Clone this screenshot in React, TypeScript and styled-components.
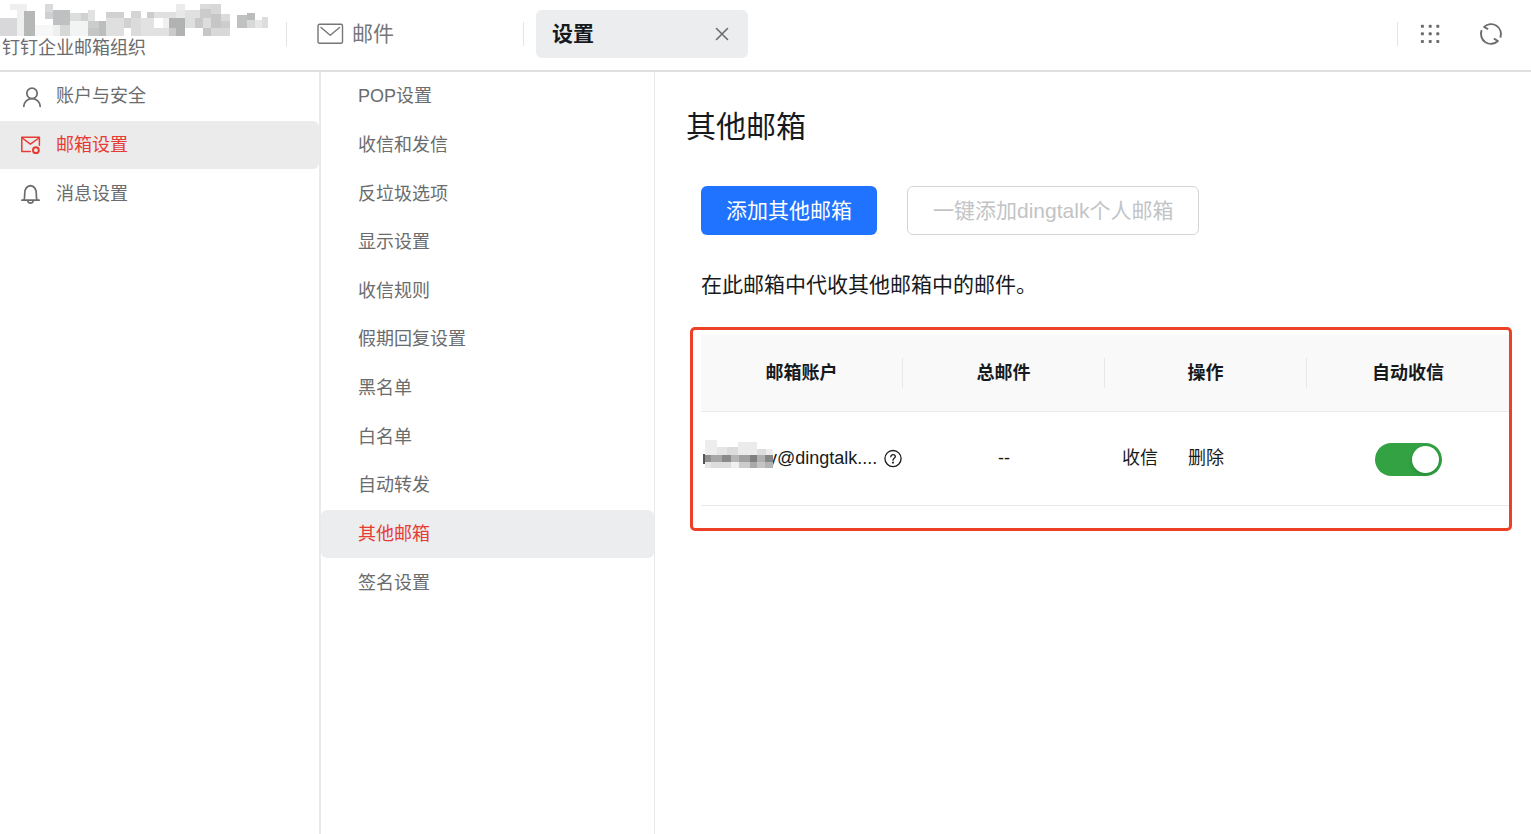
import React, { useState } from "react";
import styled, { createGlobalStyle } from "styled-components";

const GlobalStyle = createGlobalStyle`
  * { box-sizing: border-box; }
  body {
    margin: 0;
    background: #fff;
    color: #171a1d;
    font-family: "Liberation Sans", "Noto Sans CJK SC", sans-serif;
    font-size: 18px;
    line-height: 24px;
  }
  h1, p, ul { margin: 0; padding: 0; }
  ul { list-style: none; }
  a { color: inherit; text-decoration: none; }
  button { font: inherit; cursor: pointer; }
  svg { display: block; flex: none; overflow: visible; }
`;

const Page = styled.div`
  display: flex;
  flex-direction: column;
  min-height: 100vh;
`;

const TopBar = styled.header`
  display: flex;
  align-items: center;
  height: 72px;
  padding-bottom: 2px;
  border-bottom: 2px solid #dedfe0;
`;

const Account = styled.div`
  width: 286px;
  height: 60px;
  color: #6a6c6e;
`;

const OrgName = styled.div`
  padding-left: 2px;
  line-height: 24px;
`;

const Divider = styled.span`
  width: 1px;
  height: 24px;
  background: #e3e4e5;
`;

const MailTab = styled.a`
  display: flex;
  align-items: center;
  gap: 8px;
  width: 236px;
  padding-left: 30px;
  color: #747677;
  font-size: 21px;
`;

const ActiveTab = styled.div`
  display: flex;
  align-items: center;
  justify-content: space-between;
  width: 212px;
  height: 48px;
  margin: 0 auto 0 12px;
  padding: 0 16px;
  border-radius: 6px;
  background: #ecedef;
  font-size: 21px;
  font-weight: 700;
`;

const IconButton = styled.button`
  display: flex;
  padding: 0;
  border: 0;
  background: none;
  color: #6a6c6e;
`;

const Tools = styled.div`
  display: flex;
  align-items: center;
  gap: 36px;
  padding: 0 28px 0 21px;
`;

const Body = styled.div`
  display: flex;
  flex: 1;
`;

const SideNav = styled.nav<{ $width: number; $line: number }>`
  flex: none;
  width: ${(p) => p.$width}px;
  border-right: ${(p) => p.$line}px solid #e9eaeb;
`;

const NavList = styled.ul<{ $height: number }>`
  display: grid;
  grid-auto-rows: 1fr;
  min-height: ${(p) => p.$height}px;
`;

const NavLink = styled.a<{ $active?: boolean; $tone?: string; $indent: number }>`
  display: flex;
  align-items: center;
  gap: 14px;
  height: 100%;
  padding-left: ${(p) => p.$indent}px;
  border-radius: ${(p) => (p.$tone ? "0 6px 6px 0" : "6px")};
  color: ${(p) => (p.$active ? "#e63c33" : "#6a6c6e")};
  background: ${(p) => (p.$active ? p.$tone || "#ecedef" : "transparent")};
`;

const Main = styled.main`
  flex: 1;
  min-width: 0;
  padding: 37px 19px 36px 31px;
`;

const Title = styled.h1`
  font-size: 30px;
  font-weight: 400;
  line-height: 36px;
`;

const Actions = styled.div`
  display: flex;
  gap: 30px;
  padding: 41px 15px 0;
`;

const ActionButton = styled.button<{ $primary?: boolean }>`
  height: 49px;
  padding: 0 25px;
  border: ${(p) => (p.$primary ? "0" : "1px solid #d3d6d9")};
  border-radius: 6px;
  background: ${(p) => (p.$primary ? "#2073ff" : "#fff")};
  color: ${(p) => (p.$primary ? "#fff" : "#c2c4c5")};
  font-size: 21px;
  white-space: nowrap;
`;

const Hint = styled.p`
  padding: 36px 15px 0;
  font-size: 21px;
  line-height: 28px;
`;

const Highlight = styled.section`
  margin: 28px 0 0 4px;
  padding: 5px 0 22px 8px;
  border: 3px solid #ed4127;
  border-radius: 5px;
`;

const Table = styled.table`
  width: 100%;
  border-collapse: collapse;
  table-layout: fixed;
`;

const HeadCell = styled.th`
  height: 76px;
  padding: 0;
  border-bottom: 1px solid #e9e9ea;
  background: #f9f9f9;
`;

const HeadLabel = styled.div`
  line-height: 30px;
  border-right: 1px solid #e8e8e9;
  th:last-child > & { border-right: 0; }
`;

const Cell = styled.td`
  height: 94px;
  padding: 0;
  border-bottom: 1px solid #e9e9ea;
  text-align: center;
`;

const Address = styled.div`
  display: flex;
  align-items: center;
  padding-left: 2px;
`;

/* The mosaic lies over the first letters of the address. */
const AddressMask = styled.div`
  position: relative;
  z-index: 1;
  width: 65px;
`;

const AddressText = styled.span`
  margin-right: 7px;
  white-space: nowrap;
`;

const RowActions = styled.div`
  display: flex;
  gap: 30px;
  padding-left: 17px;
`;

const TextButton = styled.button`
  padding: 0;
  border: 0;
  background: none;
  color: inherit;
`;

const Switch = styled.input`
  display: block;
  appearance: none;
  width: 67px;
  height: 33px;
  margin: 2px auto 0;
  border-radius: 17px;
  background: #c8cacc;
  cursor: pointer;
  &::before {
    content: "";
    display: block;
    width: 27px;
    height: 27px;
    margin: 3px;
    border-radius: 50%;
    background: #fff;
    box-shadow: 0 2px 4px rgba(0, 35, 11, 0.2);
  }
  &:checked { background: #32a243; }
  &:checked::before { margin-left: 37px; }
`;

type Block = [number, number, number, number, string];

const nameBlocks: Block[] = [
  [10, 0, 17, 6, "#efefef"], [17, 6, 10, 8, "#efefef"], [45, 0, 8, 8, "#d9dada"], [45, 8, 8, 7, "#cfd0d0"],
  [0, 14, 17, 18, "#d8d8da"], [17, 14, 7, 18, "#efefef"], [24, 7, 11, 25, "#b6b8b7"],
  [35, 21, 18, 11, "#f7f7f7"], [53, 6, 17, 15, "#bfc0c2"], [53, 21, 7, 11, "#eeeff0"], [60, 21, 10, 11, "#d6d7d7"],
  [70, 9, 11, 8, "#dcdddd"], [81, 9, 7, 8, "#d0d1d1"], [70, 17, 18, 15, "#f2f4f3"], [88, 6, 7, 11, "#e1e2e1"],
  [88, 17, 11, 7, "#cbcccb"], [88, 24, 11, 8, "#c4c6c5"], [99, 17, 7, 15, "#bcbebd"], [106, 8, 18, 6, "#d0d1d0"],
  [106, 14, 18, 18, "#dfdfdf"], [124, 14, 7, 10, "#d1d1d2"], [131, 7, 10, 7, "#d3d4d3"],
  [131, 14, 10, 18, "#dadbda"], [141, 14, 13, 18, "#e2e2e2"],
  [147, 8, 7, 6, "#cccccc"], [154, 8, 22, 6, "#e0e0e0"], [163, 14, 6, 10, "#f0f0f0"], [154, 24, 15, 8, "#e1e1e1"],
  [169, 14, 16, 10, "#b0b3b1"], [169, 24, 7, 8, "#c9cac9"], [176, 24, 9, 8, "#b0b3b1"],
  [176, 0, 9, 6, "#eaebea"], [176, 6, 9, 8, "#e7e8e7"], [185, 6, 15, 8, "#e0e0e0"],
  [185, 14, 10, 10, "#dfdfdf"], [195, 14, 8, 10, "#c8c9c8"], [203, 14, 8, 10, "#dddddd"],
  [200, 0, 11, 5, "#dbdbdb"], [200, 5, 11, 9, "#cacbca"], [211, 0, 10, 10, "#d6d7d6"],
  [211, 10, 10, 14, "#c5c6c5"], [221, 10, 9, 7, "#dadbda"], [221, 17, 9, 7, "#cccdcc"],
  [203, 24, 8, 8, "#c5c6c5"], [211, 24, 19, 8, "#d8dad9"],
  [237, 11, 10, 13, "#c0c2c1"], [247, 9, 8, 7, "#bbbdbb"], [247, 16, 8, 8, "#d7d8d7"],
  [255, 16, 7, 8, "#e6e8e7"], [262, 13, 6, 11, "#dcdddc"],
];

const addressBlocks: Block[] = [
  [2, 0, 12, 15, "#ededed"], [14, 7, 10, 8, "#e5e5e5"], [24, 7, 11, 8, "#dcdcdc"],
  [35, 2, 19, 13, "#ebebeb"], [54, 9, 9, 6, "#dddddd"], [63, 9, 7, 6, "#ececec"],
  [0, 14, 2, 10, "#555555"], [2, 15, 6, 7, "#8f8f8f"], [8, 15, 11, 7, "#a7a7a7"], [19, 15, 9, 7, "#8a8a8a"],
  [28, 15, 8, 7, "#b5b5b5"], [36, 15, 11, 7, "#a0a0a0"], [47, 15, 7, 7, "#7f7f7f"], [54, 15, 8, 7, "#b0b0b0"],
  [62, 15, 8, 7, "#868686"], [2, 22, 6, 6, "#e7e7e7"], [8, 22, 20, 6, "#dddddd"], [28, 22, 8, 6, "#f0f0f0"],
  [36, 22, 11, 6, "#cccccc"], [47, 22, 7, 6, "#aaaaaa"], [54, 22, 8, 6, "#c4c4c4"], [62, 22, 8, 6, "#b3b3b3"],
];

function Mosaic({ blocks, width, height }: { blocks: Block[]; width: number; height: number }) {
  return (
    <svg width={width} height={height} shapeRendering="crispEdges" aria-hidden="true">
      {blocks.map(([x, y, w, h, fill], i) => (
        <rect key={i} x={x} y={y} width={w} height={h} fill={fill} />
      ))}
    </svg>
  );
}

const stroke = { fill: "none", stroke: "currentColor", strokeLinecap: "round", strokeLinejoin: "round" } as const;

const MailIcon = () => (
  <svg width="27" height="22" viewBox="0 0 27 22" {...stroke} strokeWidth="1.4">
    <rect x="1" y="1.3" width="24.5" height="19" rx="1.5" />
    <path d="M4 4.5 13.2 12.3 22.6 4.5" />
  </svg>
);

const CloseIcon = () => (
  <svg width="20" height="20" viewBox="0 0 20 20" {...stroke} strokeWidth="1.6">
    <path d="M4.5 4.5 15.5 15.5M15.5 4.5 4.5 15.5" />
  </svg>
);

const GridIcon = () => (
  <svg width="24" height="24" viewBox="0 0 24 24" fill="currentColor">
    {[4.3, 11.8, 19.4].map((y) => [3.4, 11.2, 18.8].map((x) => <rect key={`${x}-${y}`} x={x - 1.5} y={y - 1.5} width="3" height="3" rx="0.9" />))}
  </svg>
);

const RefreshIcon = () => (
  <svg width="24" height="24" viewBox="0 0 24 24" {...stroke} strokeWidth="1.9" strokeLinecap="butt">
    <path d="M2.6 8.2A10 10 0 0 0 18.9 19L14.9 16.6" />
    <path d="M21.4 15.6A10 10 0 0 0 5.1 4.9L9.1 7.3" />
  </svg>
);

const UserIcon = () => (
  <svg width="22" height="22" viewBox="0 0 22 22" {...stroke} strokeWidth="1.7">
    <circle cx="12" cy="8.3" r="5.2" />
    <path d="M3.8 21.4C4 17 7.4 13.6 12 13.6S20 17 20.2 21.4" />
  </svg>
);

const MailSettingIcon = () => (
  <svg width="22" height="22" viewBox="0 0 22 22" {...stroke} strokeWidth="1.5">
    <path d="M10.3 17.6H1.8V3.2H19.4V11.2" />
    <path d="M2.2 4 10.4 10.2 19 4" />
    <circle cx="15.9" cy="16.2" r="2.9" strokeWidth="2" />
  </svg>
);

const BellIcon = () => (
  <svg width="22" height="22" viewBox="0 0 22 22" {...stroke} strokeWidth="1.7">
    <path d="M1.9 17.2H19.1M3.9 17C4.9 15 4.7 12.6 4.7 10.2 4.9 6 7.2 3 10.5 2.6 13.8 3 16.1 6 16.3 10.2 16.3 12.6 16.1 15 17.1 17" />
    <path d="M7.8 17.8C8.4 20.8 12.6 20.8 13.2 17.8" />
  </svg>
);

const HelpIcon = () => (
  <svg width="18" height="18" viewBox="0 0 18 18" {...stroke} strokeWidth="1.3">
    <circle cx="9" cy="9.6" r="8.1" />
    <path d="M6.8 7.8C6.8 4.9 11.3 5 11.3 7.7 11.3 9.4 9 9.3 9 11.2" />
    <circle cx="9" cy="13.6" r="0.4" fill="currentColor" />
  </svg>
);

const sections = [
  { label: "账户与安全", icon: <UserIcon /> },
  { label: "邮箱设置", icon: <MailSettingIcon />, active: true },
  { label: "消息设置", icon: <BellIcon /> },
];

const settings = ["POP设置", "收信和发信", "反垃圾选项", "显示设置", "收信规则", "假期回复设置", "黑名单", "白名单", "自动转发", "其他邮箱", "签名设置"];

const columns = ["邮箱账户", "总邮件", "操作", "自动收信"];

export default function App() {
  const [autoReceive, setAutoReceive] = useState(true);
  return (
    <Page>
      <GlobalStyle />
      <TopBar>
        <Account>
          <Mosaic blocks={nameBlocks} width={270} height={32} />
          <OrgName>钉钉企业邮箱组织</OrgName>
        </Account>
        <Divider />
        <MailTab href="#mail"><MailIcon />邮件</MailTab>
        <Divider />
        <ActiveTab>
          设置
          <IconButton aria-label="关闭"><CloseIcon /></IconButton>
        </ActiveTab>
        <Divider />
        <Tools>
          <IconButton aria-label="应用"><GridIcon /></IconButton>
          <IconButton aria-label="刷新"><RefreshIcon /></IconButton>
        </Tools>
      </TopBar>
      <Body>
        <SideNav $width={321} $line={2}>
          <NavList $height={146}>
            {sections.map((s) => (
              <li key={s.label}>
                <NavLink href="#section" $indent={20} $tone="#ebebeb" $active={s.active}>{s.icon}{s.label}</NavLink>
              </li>
            ))}
          </NavList>
        </SideNav>
        <SideNav $width={334} $line={1}>
          <NavList $height={535}>
            {settings.map((label) => (
              <li key={label}>
                <NavLink href="#setting" $indent={37} $active={label === "其他邮箱"}>{label}</NavLink>
              </li>
            ))}
          </NavList>
        </SideNav>
        <Main>
          <Title>其他邮箱</Title>
          <Actions>
            <ActionButton $primary>添加其他邮箱</ActionButton>
            <ActionButton>一键添加dingtalk个人邮箱</ActionButton>
          </Actions>
          <Hint>在此邮箱中代收其他邮箱中的邮件。</Hint>
          <Highlight>
            <Table>
              <thead>
                <tr>
                  {columns.map((c) => <HeadCell key={c}><HeadLabel>{c}</HeadLabel></HeadCell>)}
                </tr>
              </thead>
              <tbody>
                <tr>
                  <Cell>
                    <Address>
                      <AddressMask>
                        <Mosaic blocks={addressBlocks} width={70} height={36} />
                      </AddressMask>
                      <AddressText>y@dingtalk....</AddressText>
                      <HelpIcon />
                    </Address>
                  </Cell>
                  <Cell>--</Cell>
                  <Cell>
                    <RowActions>
                      <TextButton>收信</TextButton>
                      <TextButton>删除</TextButton>
                    </RowActions>
                  </Cell>
                  <Cell>
                    <Switch type="checkbox" aria-label="自动收信" checked={autoReceive} onChange={(e) => setAutoReceive(e.target.checked)} />
                  </Cell>
                </tr>
              </tbody>
            </Table>
          </Highlight>
        </Main>
      </Body>
    </Page>
  );
}
